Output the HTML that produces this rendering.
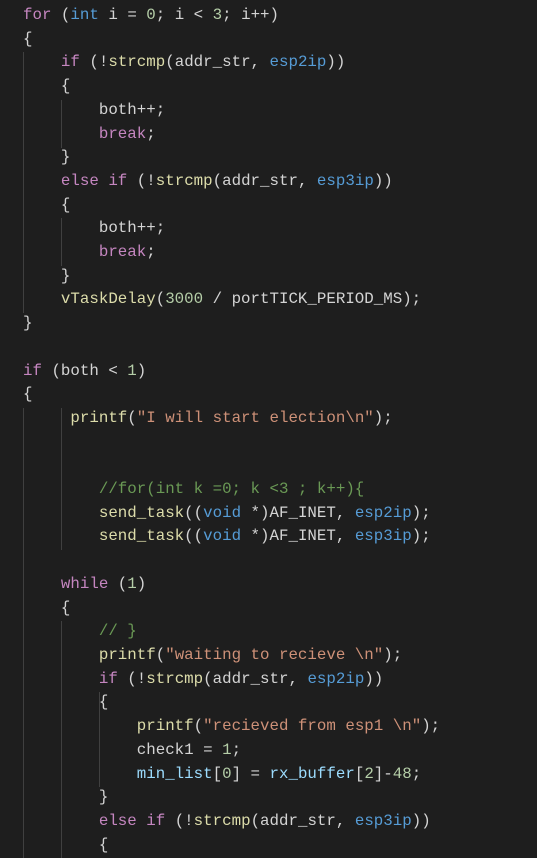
<!DOCTYPE html>
<html><head><meta charset="utf-8"><style>
html,body{margin:0;padding:0;background:#1e1e1e;width:537px;height:858px;overflow:hidden}
pre{margin:0;position:absolute;left:23px;top:4px;font-family:"Liberation Mono",monospace;font-size:15.8px;line-height:23.7px;color:#d4d4d4}
.k{color:#c586c0}.t{color:#569cd6}.f{color:#dcdcaa}.v{color:#9cdcfe}.s{color:#ce9178}.n{color:#b5cea8}.c{color:#6a9955}.m{color:#569cd6}
.g{position:absolute;width:1px;background:#404040}
</style></head><body>
<div class="g" style="left:23px;top:52px;height:261px"></div>
<div class="g" style="left:61px;top:100px;height:48px"></div>
<div class="g" style="left:61px;top:218px;height:48px"></div>
<div class="g" style="left:23px;top:408px;height:450px"></div>
<div class="g" style="left:61px;top:408px;height:142px"></div>
<div class="g" style="left:61px;top:621px;height:237px"></div>
<div class="g" style="left:99px;top:692px;height:95px"></div>
<pre><span class="k">for</span> (<span class="t">int</span> i = <span class="n">0</span>; i &lt; <span class="n">3</span>; i++)
{
    <span class="k">if</span> (!<span class="f">strcmp</span>(addr_str, <span class="m">esp2ip</span>))
    {
        both++;
        <span class="k">break</span>;
    }
    <span class="k">else</span> <span class="k">if</span> (!<span class="f">strcmp</span>(addr_str, <span class="m">esp3ip</span>))
    {
        both++;
        <span class="k">break</span>;
    }
    <span class="f">vTaskDelay</span>(<span class="n">3000</span> / portTICK_PERIOD_MS);
}

<span class="k">if</span> (both &lt; <span class="n">1</span>)
{
     <span class="f">printf</span>(<span class="s">"I will start election\n"</span>);


        <span class="c">//for(int k =0; k &lt;3 ; k++){</span>
        <span class="f">send_task</span>((<span class="t">void</span> *)AF_INET, <span class="m">esp2ip</span>);
        <span class="f">send_task</span>((<span class="t">void</span> *)AF_INET, <span class="m">esp3ip</span>);

    <span class="k">while</span> (<span class="n">1</span>)
    {
        <span class="c">// }</span>
        <span class="f">printf</span>(<span class="s">"waiting to recieve \n"</span>);
        <span class="k">if</span> (!<span class="f">strcmp</span>(addr_str, <span class="m">esp2ip</span>))
        {
            <span class="f">printf</span>(<span class="s">"recieved from esp1 \n"</span>);
            check1 = <span class="n">1</span>;
            <span class="v">min_list</span>[<span class="n">0</span>] = <span class="v">rx_buffer</span>[<span class="n">2</span>]-<span class="n">48</span>;
        }
        <span class="k">else</span> <span class="k">if</span> (!<span class="f">strcmp</span>(addr_str, <span class="m">esp3ip</span>))
        {
</pre>
</body></html>
